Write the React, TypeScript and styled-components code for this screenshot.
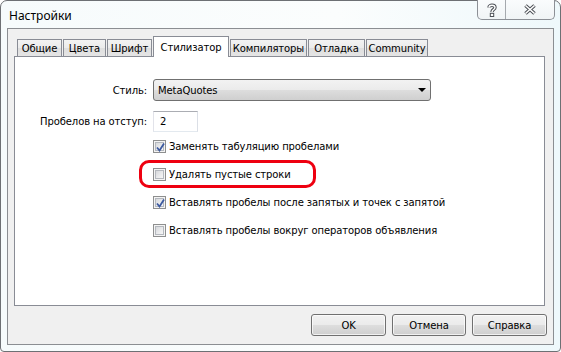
import React from "react";
import styled, { createGlobalStyle } from "styled-components";

const GlobalStyle = createGlobalStyle`
  html, body { margin: 0; padding: 0; background: #ffffff; }
  * { box-sizing: border-box; }
`;

const UI_FONT = `"DejaVu Sans", "Liberation Sans", sans-serif`;

const Window = styled.div`
  width: 561px;
  height: 352px;
  border: 1px solid #6d7074;
  border-radius: 7px 7px 4px 4px;
  background: linear-gradient(90deg, #f6fbfc 0%, #fbfdfd 60%, #eef8fb 100%);
  padding: 0 6px 6px 6px;
  display: flex;
  flex-direction: column;
  font-family: ${UI_FONT};
  font-size: 10px;
  color: #000;
`;

const TitleBar = styled.div`
  height: 27px;
  display: flex;
  justify-content: space-between;
  align-items: flex-start;
  flex: none;
`;

const Title = styled.div`
  font-family: "Noto Sans", "Open Sans", sans-serif;
  font-size: 12px;
  padding: 6px 0 0 2px;
  color: #000;
`;

const CaptionButtons = styled.div`
  display: flex;
  margin: -1px -1px 0 0;
  height: 20px;
  border: 1px solid #8c9096;
  border-top: none;
  border-radius: 0 0 5px 5px;
  background: linear-gradient(#fafcfd, #f0f4f6);
  overflow: hidden;
`;

const CapBtn = styled.div<{ $w: number; $divider?: boolean }>`
  width: ${(p) => p.$w}px;
  height: 100%;
  display: flex;
  align-items: center;
  justify-content: center;
  border-right: ${(p) => (p.$divider ? "1px solid #a5a9ae" : "none")};
`;

const Client = styled.div`
  flex: 1;
  border: 1px solid #8b8e92;
  background: #f0f0f0;
  padding: 7px 8px 7px 6px;
  display: flex;
  flex-direction: column;
`;

const TabRow = styled.div`
  display: flex;
  align-items: flex-end;
  height: 21px;
  padding-left: 3px;
  position: relative;
  z-index: 1;
  margin-bottom: -1px;
`;

const Tab = styled.div<{ $active?: boolean; $w: number }>`
  width: ${(p) => p.$w}px;
  height: ${(p) => (p.$active ? 21 : 18)}px;
  margin-right: 1px;
  border: 1px solid #898c95;
  border-bottom: ${(p) => (p.$active ? "none" : "1px solid #898c95")};
  background: ${(p) =>
    p.$active ? "#ffffff" : "linear-gradient(#f3f3f3 0%, #ebebeb 50%, #dedede 50%, #e5e5e5 100%)"};
  display: flex;
  align-items: center;
  justify-content: center;
  padding-top: ${(p) => (p.$active ? 0 : 1)}px;
  white-space: nowrap;
  letter-spacing: -0.1px;
`;

const Panel = styled.div`
  height: 250px;
  border: 1px solid #898c95;
  background: #ffffff;
  padding: 22px 0 0 0;
  display: flex;
  flex-direction: column;
`;

const FormGrid = styled.div`
  display: grid;
  grid-template-columns: 132px auto;
  column-gap: 6px;
  row-gap: 10px;
  align-items: center;
`;

const Label = styled.div`
  text-align: right;
  white-space: nowrap;
  letter-spacing: -0.1px;
`;

const Select = styled.div`
  width: 278px;
  height: 22px;
  border: 1px solid #707070;
  border-radius: 3px;
  background: linear-gradient(#f2f2f2 0%, #ebebeb 48%, #dddddd 52%, #cfcfcf 100%);
  display: flex;
  align-items: center;
  justify-content: space-between;
  padding: 0 4px 0 4px;
  letter-spacing: -0.1px;
`;

const Arrow = styled.div`
  width: 0;
  height: 0;
  border-left: 4px solid transparent;
  border-right: 4px solid transparent;
  border-top: 4px solid #000;
`;

const TextInput = styled.div`
  width: 45px;
  height: 21px;
  border: 1px solid #abadb3;
  border-left-color: #e2e3ea;
  border-right-color: #dbdfe6;
  border-bottom-color: #e3e9ef;
  background: #fff;
  display: flex;
  align-items: center;
  padding-left: 6px;
`;

const Options = styled.div`
  display: flex;
  flex-direction: column;
  gap: 14px;
  padding: 7px 0 0 138px;
`;

const Option = styled.div`
  position: relative;
  display: flex;
  align-items: center;
  gap: 3px;
  height: 14px;
  white-space: nowrap;
  letter-spacing: -0.1px;
`;

const Highlight = styled.div`
  position: absolute;
  left: -14px;
  top: -7px;
  width: 177px;
  height: 28px;
  border: 3px solid #ee0010;
  border-radius: 10px;
  pointer-events: none;
`;

const Box = styled.div`
  width: 13px;
  height: 13px;
  flex: none;
  border: 1px solid #8e8f8f;
  background: #f4f4f4;
  padding: 1px;
  display: flex;
`;

const BoxInner = styled.div`
  flex: 1;
  border: 1px solid #b4b8be;
  background: linear-gradient(135deg, #d6d8db 0%, #e8e9eb 50%, #f6f6f6 100%);
  position: relative;
`;

const Footer = styled.div`
  display: flex;
  justify-content: flex-end;
  gap: 6px;
  padding-top: 8px;
  margin-right: -2px;
`;

const Button = styled.div<{ $w: number }>`
  width: ${(p) => p.$w}px;
  height: 22px;
  border: 1px solid #707070;
  border-radius: 3px;
  background: linear-gradient(#f2f2f2 0%, #ebebeb 48%, #dddddd 52%, #cfcfcf 100%);
  box-shadow: inset 0 0 0 1px rgba(255, 255, 255, 0.7);
  display: flex;
  align-items: center;
  justify-content: center;
  letter-spacing: -0.1px;
`;

const Check = () => (
  <svg width="9" height="9" viewBox="0 0 9 9" style={{ position: "absolute", left: 0, top: 0 }}>
    <path d="M1 4.5 L3.5 7.5 L8 0.5" fill="none" stroke="#3d5aa0" strokeWidth="1.8" />
  </svg>
);

const CheckBox = ({ checked }: { checked?: boolean }) => (
  <Box>
    <BoxInner>{checked && <Check />}</BoxInner>
  </Box>
);

const HelpGlyph = () => (
  <svg width="12" height="14" viewBox="0 0 12 14">
    <path d="M3 4.5 C3 1.5 9 1.5 9 4.5 C9 6.5 6 6.5 6 9" fill="none" stroke="#4b4f55" strokeWidth="3.4" />
    <path d="M3 4.5 C3 1.5 9 1.5 9 4.5 C9 6.5 6 6.5 6 9" fill="none" stroke="#ffffff" strokeWidth="1.4" />
    <rect x="4.3" y="10.3" width="3.4" height="3.2" fill="#ffffff" stroke="#4b4f55" strokeWidth="1" />
  </svg>
);

const CloseGlyph = () => (
  <svg width="14" height="11" viewBox="0 0 14 11">
    <path d="M2.5 1.5 L11.5 9.5 M11.5 1.5 L2.5 9.5" fill="none" stroke="#4b4f55" strokeWidth="3.6" />
    <path d="M2.5 1.5 L11.5 9.5 M11.5 1.5 L2.5 9.5" fill="none" stroke="#ffffff" strokeWidth="1.6" />
  </svg>
);

const tabs = [
  { name: "Общие", w: 45 },
  { name: "Цвета", w: 43 },
  { name: "Шрифт", w: 45 },
  { name: "Стилизатор", w: 76, active: true },
  { name: "Компиляторы", w: 77 },
  { name: "Отладка", w: 57 },
  { name: "Community", w: 62 },
];

const options = [
  { text: "Заменять табуляцию пробелами", checked: true },
  { text: "Удалять пустые строки", checked: false, highlight: true },
  { text: "Вставлять пробелы после запятых и точек с запятой", checked: true },
  { text: "Вставлять пробелы вокруг операторов объявления", checked: false },
];

export default function App() {
  return (
    <>
      <GlobalStyle />
      <Window>
        <TitleBar>
          <Title>Настройки</Title>
          <CaptionButtons>
            <CapBtn $w={28} $divider>
              <HelpGlyph />
            </CapBtn>
            <CapBtn $w={48}>
              <CloseGlyph />
            </CapBtn>
          </CaptionButtons>
        </TitleBar>
        <Client>
          <TabRow>
            {tabs.map((t) => (
              <Tab key={t.name} $active={t.active} $w={t.w}>
                {t.name}
              </Tab>
            ))}
          </TabRow>
          <Panel>
            <FormGrid>
              <Label>Стиль:</Label>
              <Select>
                <span>MetaQuotes</span>
                <Arrow />
              </Select>
              <Label>Пробелов на отступ:</Label>
              <TextInput>2</TextInput>
            </FormGrid>
            <Options>
              {options.map((o) => (
                <Option key={o.text}>
                  {o.highlight && <Highlight />}
                  <CheckBox checked={o.checked} />
                  <span>{o.text}</span>
                </Option>
              ))}
            </Options>
          </Panel>
          <Footer>
            <Button $w={75}>OK</Button>
            <Button $w={74}>Отмена</Button>
            <Button $w={75}>Справка</Button>
          </Footer>
        </Client>
      </Window>
    </>
  );
}
